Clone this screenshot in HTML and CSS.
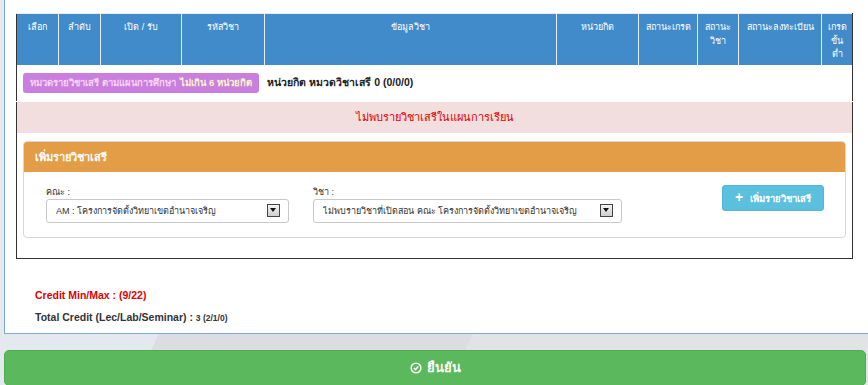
FILE: index.html
```html
<!DOCTYPE html>
<html lang="th">
  <head>
    <meta charset="UTF-8" />
    <meta name="viewport" content="width=device-width, initial-scale=1.0" />
    <title>ลงทะเบียนรายวิชาเสรี</title>
    <link rel="stylesheet" href="styles.css">
  </head>
  <body>
    <div class="page-panel">
      <table class="course-table">
        <thead>
          <tr>
            <th class="c-select">เลือก</th>
            <th class="c-order">ลำดับ</th>
            <th class="c-open">เปิด / รับ</th>
            <th class="c-code">รหัสวิชา</th>
            <th class="c-info">ข้อมูลวิชา</th>
            <th class="c-credit">หน่วยกิต</th>
            <th class="c-grade">สถานะเกรด</th>
            <th class="c-status">สถานะ<br>วิชา</th>
            <th class="c-reg">สถานะลงทะเบียน</th>
            <th class="c-min">เกรด<br>ขั้น<br>ต่ำ</th>
          </tr>
        </thead>
        <tbody>
          <tr>
            <td colspan="10" class="group-row">
              <span class="group-label">หมวดรายวิชาเสรี ตามแผนการศึกษา <b>ไม่เกิน 6 หน่วยกิต</b></span>
              <span class="group-total">หน่วยกิต หมวดวิชาเสรี 0 (0/0/0)</span>
            </td>
          </tr>
          <tr>
            <td colspan="10" class="empty-row">ไม่พบรายวิชาเสรีในแผนการเรียน</td>
          </tr>
          <tr>
            <td colspan="10" class="add-row">
              <div class="add-panel">
                <div class="add-heading">เพิ่มรายวิชาเสรี</div>
                <div class="add-body">
                  <div class="field">
                    <label>คณะ :</label>
                    <div class="fake-select">
                      <span>AM : โครงการจัดตั้งวิทยาเขตอำนาจเจริญ</span>
                      <i class="arrow"></i>
                    </div>
                  </div>
                  <div class="field">
                    <label>วิชา :</label>
                    <div class="fake-select">
                      <span>ไม่พบรายวิชาที่เปิดสอน คณะ โครงการจัดตั้งวิทยาเขตอำนาจเจริญ</span>
                      <i class="arrow"></i>
                    </div>
                  </div>
                  <button type="button" class="btn-add"><span class="plus">+</span> เพิ่มรายวิชาเสรี</button>
                </div>
              </div>
            </td>
          </tr>
        </tbody>
      </table>

      <div class="credit-info">
        <p class="credit-minmax">Credit Min/Max : (9/22)</p>
        <p class="credit-total">Total Credit (Lec/Lab/Seminar) : <small>3 (2/1/0)</small></p>
      </div>
    </div>

    <button type="button" class="btn-confirm">
      <svg width="12" height="12" viewBox="0 0 12 12" aria-hidden="true">
        <circle cx="6" cy="6" r="4.8" fill="none" stroke="#fff" stroke-width="1.6" />
        <path d="M3.8 6.1 L5.4 7.6 L8.3 4.6" fill="none" stroke="#fff" stroke-width="1.5" />
      </svg>
      ยืนยัน
    </button>
  </body>
</html>
```

FILE: styles.css
```css
body {
  margin: 0;
  font-family: "Liberation Sans", Tahoma, "Noto Sans", "DejaVu Sans", sans-serif;
  background-color: #dfe0e5;
  background-image: linear-gradient(115deg, #e4e9f0 0, #e4e9f0 30%, #dcdde2 30%, #dcdde2 60%, #e2e3e7 60%);
  color: #333;
  height: 385px;
  overflow: hidden;
}

.page-panel {
  margin-left: 4px;
  width: 860px;
  background-color: #ffffff;
  border: 1px solid #7fa8d6;
  border-top: none;
  padding: 13px 0 4px 11px;
}

.course-table {
  width: 837px;
  border-collapse: collapse;
  border: 1px solid #333;
  border-top: none;
}

.course-table th {
  background-color: #428bca;
  color: #ffffff;
  font-weight: normal;
  font-size: 9px;
  line-height: 13.5px;
  vertical-align: top;
  text-align: center;
  padding: 7px 3px 3px;
  border: 1px solid #e4ecf5;
  border-bottom: none;
}

.course-table th:first-child {
  border-left: 1px solid #333;
}

.course-table th:last-child {
  border-right: 1px solid #333;
}

.c-select { width: 35px; }
.c-order { width: 35px; }
.c-open { width: 74px; }
.c-code { width: 76px; }
.c-credit { width: 75px; }
.c-grade { width: 52px; }
.c-status { width: 34px; }
.c-reg { width: 76px; }
.c-min { width: 24px; }

.group-row {
  padding: 7px 6px 8px;
  height: 21px;
}

.group-label {
  display: inline-block;
  background-color: #c87fde;
  color: #f7d3f0;
  font-size: 9.5px;
  font-weight: bold;
  line-height: 14px;
  padding: 3px 7px;
  border-radius: 3px;
}

.group-label b {
  color: #fff6c8;
  margin-left: 2px;
}

.group-total {
  font-size: 10.5px;
  font-weight: bold;
  color: #222;
  margin-left: 4px;
}

.empty-row {
  background-color: #f2dede;
  color: #e00000;
  text-align: center;
  font-size: 11px;
  height: 31px;
  padding: 0;
  border-top: 1px solid #fff;
}

.add-row {
  padding: 8px 6px 20px;
}

.add-panel {
  border: 1px solid #e3d3d3;
  border-radius: 4px;
  overflow: hidden;
}

.add-heading {
  background-color: #e29d46;
  color: #ffffff;
  font-size: 11px;
  font-weight: bold;
  height: 30px;
  line-height: 30px;
  padding-left: 11px;
}

.add-body {
  display: grid;
  grid-template-columns: 243px 309px 1fr;
  column-gap: 24px;
  padding: 13px 21px 14px 22px;
}

.field label {
  display: block;
  font-size: 9px;
  color: #333;
  height: 14px;
  line-height: 14px;
}

.fake-select {
  display: flex;
  align-items: center;
  justify-content: space-between;
  height: 24px;
  box-sizing: border-box;
  border: 1px solid #c8c8c8;
  border-radius: 3px;
  padding: 0 8px 0 9px;
  font-size: 9px;
  color: #333;
  white-space: nowrap;
  overflow: hidden;
}

.fake-select span {
  overflow: hidden;
}

.arrow {
  flex: none;
  position: relative;
  width: 11px;
  height: 11px;
  border: 1px solid #444;
  background: linear-gradient(#f4f4f4, #cfcfcf);
  margin-left: 6px;
}

.arrow::after {
  content: "";
  position: absolute;
  left: 2px;
  top: 3px;
  border-left: 3.5px solid transparent;
  border-right: 3.5px solid transparent;
  border-top: 4px solid #111;
}

.btn-add {
  justify-self: end;
  align-self: start;
  background-color: #5bc0de;
  border: 1px solid #52b6d4;
  border-radius: 3px;
  color: #ffffff;
  font-family: inherit;
  font-size: 9.5px;
  font-weight: bold;
  height: 26px;
  width: 102px;
  padding: 0;
}

.btn-add .plus {
  font-size: 14px;
  margin-right: 4px;
}

.credit-info {
  padding: 25px 0 0 19px;
}

.credit-info p {
  margin: 0;
  font-weight: bold;
  font-size: 10.5px;
  line-height: 22px;
}

.credit-minmax {
  color: #e00000;
}

.credit-total {
  color: #333;
}

.credit-total small {
  font-size: 8.5px;
}

.btn-confirm {
  display: flex;
  align-items: center;
  justify-content: center;
  gap: 5px;
  margin: 16px 0 0 4px;
  width: 862px;
  height: 36px;
  background-color: #5cb85c;
  border: 1px solid #4cae4c;
  border-radius: 5px;
  color: #ffffff;
  font-family: inherit;
  font-size: 13px;
  font-weight: bold;
}
```
